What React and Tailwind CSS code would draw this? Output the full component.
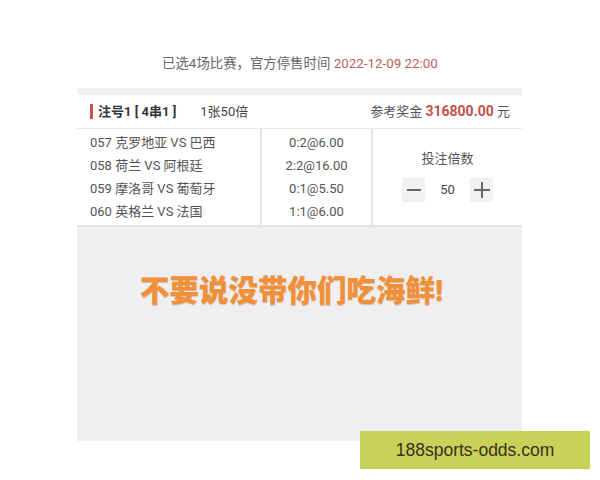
import React from "react";

export default function App() {
  const matches = [
    { name: "057 克罗地亚 VS 巴西", pick: "0:2@6.00" },
    { name: "058 荷兰 VS 阿根廷", pick: "2:2@16.00" },
    { name: "059 摩洛哥 VS 葡萄牙", pick: "0:1@5.50" },
    { name: "060 英格兰 VS 法国", pick: "1:1@6.00" },
  ];

  return (
    <div
      className="relative w-[600px] h-[480px] bg-white overflow-hidden"
      style={{ fontFamily: 'Roboto, "Noto Sans CJK SC", sans-serif' }}
    >
      {/* Header line */}
      <div className="pt-[54px] h-[88px] text-center text-[13.4px] leading-[20px] text-[#666]">
        已选4场比赛，官方停售时间 <span className="text-[#c0605c]">2022-12-09 22:00</span>
      </div>

      <div className="ml-[77px] w-[445px]">
        <div className="h-[7px] bg-[#f0f0f2]" />

        {/* Bet summary */}
        <div className="h-[34px] flex items-center border-b border-[#e6e6e6] text-[13px] text-[#444]">
          <div className="ml-[13px] w-[3px] h-[15px] bg-[#c9524e]" />
          <div className="ml-[5px] font-bold text-[#333]">注号1 [ 4串1 ]</div>
          <div className="ml-[24px]">1张50倍</div>
          <div className="ml-auto mr-[12px] text-[#555]">
            参考奖金 <span className="font-bold text-[14px] text-[#c0504d]">316800.00</span> 元
          </div>
        </div>

        {/* Matches */}
        <div className="grid grid-cols-[185px_111px_149px] border-b-2 border-[#e4e4e4] text-[13px] text-[#555]">
          <div className="py-[2px] border-r-2 border-[#e4e4e4]">
            {matches.map((m) => (
              <div key={m.name} className="h-[23px] leading-[23px] pl-[13px]">
                {m.name}
              </div>
            ))}
          </div>
          <div className="py-[2px] border-r-2 border-[#e4e4e4]">
            {matches.map((m) => (
              <div key={m.pick} className="h-[23px] leading-[23px] text-center">
                {m.pick}
              </div>
            ))}
          </div>
          <div className="flex flex-col items-center pt-[20px]">
            <div className="text-[#555]">投注倍数</div>
            <div className="mt-[9px] flex items-center">
              <div className="w-[23px] h-[24px] bg-[#f1f1f1] flex items-center justify-center">
                <div className="w-[14px] h-[2px] bg-[#666]" />
              </div>
              <div className="w-[45px] text-center text-[#444]">50</div>
              <div className="w-[23px] h-[24px] bg-[#f1f1f1] flex items-center justify-center relative">
                <div className="w-[16px] h-[2px] bg-[#666]" />
                <div className="absolute w-[2px] h-[16px] bg-[#666]" />
              </div>
            </div>
          </div>
        </div>

        {/* Empty area */}
        <div className="h-[214px] bg-[#efeff2] flex justify-center pt-[47px]">
          <div
            className="mr-[16px] text-[29.5px] leading-[34px] font-black text-[#f0913a]"
            style={{ textShadow: "0 1px 1px rgba(180,90,20,0.35)" }}
          >
            不要说没带你们吃海鲜!
          </div>
        </div>
      </div>

      {/* Watermark */}
      <div
        className="absolute left-[360px] top-[431px] w-[230px] h-[38px] bg-[#c8d158] flex items-center justify-center text-[17.5px] text-[#3b2f1f]"
        style={{ fontFamily: '"Liberation Sans", sans-serif' }}
      >
        188sports-odds.com
      </div>
    </div>
  );
}
